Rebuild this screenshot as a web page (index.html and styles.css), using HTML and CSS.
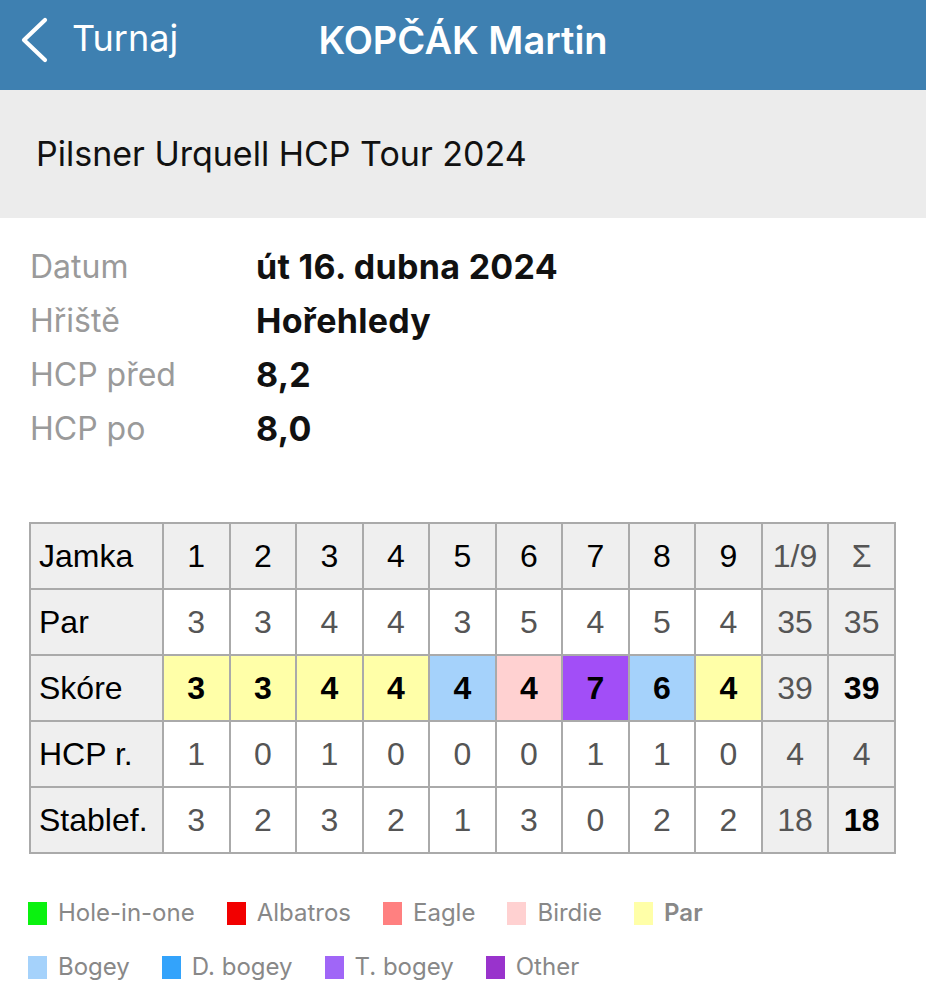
FILE: index.html
```html
<!DOCTYPE html>
<html lang="cs">
  <head>
    <meta charset="UTF-8" />
    <meta name="viewport" content="width=device-width, initial-scale=1.0" />
    <title>KOPČÁK Martin</title>
    <link rel="stylesheet" href="styles.css">
  </head>
  <body>
    <div class="nav">
      <a class="back" href="#">
        <svg class="chevron" width="30" height="48" viewBox="0 0 30 48">
          <path d="M25 4 L4 24 L25 44" fill="none" stroke="#fff" stroke-width="4.2" stroke-linecap="round" stroke-linejoin="round" />
        </svg>
        <span>Turnaj</span>
      </a>
      <div class="nav_title">KOPČÁK Martin</div>
      <div></div>
    </div>

    <div class="tour">Pilsner Urquell HCP Tour 2024</div>

    <div class="info">
      <div class="label">Datum</div>
      <div class="value">út 16. dubna 2024</div>
      <div class="label">Hřiště</div>
      <div class="value">Hořehledy</div>
      <div class="label">HCP před</div>
      <div class="value">8,2</div>
      <div class="label">HCP po</div>
      <div class="value">8,0</div>
    </div>

    <table class="card">
      <colgroup>
        <col class="col_name" />
        <col span="11" />
      </colgroup>
      <tr class="row_head">
        <td class="name">Jamka</td>
        <td>1</td><td>2</td><td>3</td><td>4</td><td>5</td><td>6</td><td>7</td><td>8</td><td>9</td>
        <td class="sum">1/9</td>
        <td class="sum">Σ</td>
      </tr>
      <tr>
        <td class="name">Par</td>
        <td>3</td><td>3</td><td>4</td><td>4</td><td>3</td><td>5</td><td>4</td><td>5</td><td>4</td>
        <td class="sum">35</td>
        <td class="sum">35</td>
      </tr>
      <tr class="row_score">
        <td class="name">Skóre</td>
        <td class="par">3</td>
        <td class="par">3</td>
        <td class="par">4</td>
        <td class="par">4</td>
        <td class="bogey">4</td>
        <td class="birdie">4</td>
        <td class="tbogey">7</td>
        <td class="bogey">6</td>
        <td class="par">4</td>
        <td class="sum">39</td>
        <td class="sum total">39</td>
      </tr>
      <tr>
        <td class="name">HCP r.</td>
        <td>1</td><td>0</td><td>1</td><td>0</td><td>0</td><td>0</td><td>1</td><td>1</td><td>0</td>
        <td class="sum">4</td>
        <td class="sum">4</td>
      </tr>
      <tr>
        <td class="name">Stablef.</td>
        <td>3</td><td>2</td><td>3</td><td>2</td><td>1</td><td>3</td><td>0</td><td>2</td><td>2</td>
        <td class="sum">18</td>
        <td class="sum total">18</td>
      </tr>
    </table>

    <ul class="legend">
      <li><i class="hio"></i>Hole-in-one</li>
      <li><i class="albatros"></i>Albatros</li>
      <li><i class="eagle"></i>Eagle</li>
      <li><i class="birdie"></i>Birdie</li>
      <li class="current"><i class="par"></i>Par</li>
    </ul>
    <ul class="legend">
      <li><i class="bogey"></i>Bogey</li>
      <li><i class="dbogey"></i>D. bogey</li>
      <li><i class="tbogey"></i>T. bogey</li>
      <li><i class="other"></i>Other</li>
    </ul>
  </body>
</html>
```

FILE: styles.css
```css
html,
body,
div,
span,
a,
table,
tr,
td,
ul,
li,
i {
  margin: 0;
  padding: 0;
  border: 0;
  font-size: 100%;
  font-weight: normal;
  font-style: normal;
}

body {
  width: 926px;
  line-height: 1;
  background: #fff;
  color: #000;
  font-family: Inter, "Noto Sans", sans-serif;
}

a {
  color: #fff;
  text-decoration: none;
}

li {
  list-style: none;
}

/* nav bar */
.nav {
  height: 90px;
  background: #3e80b1;
  display: grid;
  grid-template-columns: 1fr auto 1fr;
  align-items: center;
  padding-bottom: 10px;
  box-sizing: border-box;
}
.back {
  display: flex;
  align-items: center;
  gap: 22px;
  padding-left: 20px;
  font-size: 36px;
}
.chevron {
  display: block;
}
.back span {
  margin-top: -4px;
}
.nav_title {
  color: #fff;
  font-size: 38px;
  font-weight: 600;
}

/* tour band */
.tour {
  height: 128px;
  background: #ececec;
  display: flex;
  align-items: center;
  padding-left: 36px;
  font-size: 34px;
  color: #111;
}

/* info rows */
.info {
  display: grid;
  grid-template-columns: 226px auto;
  grid-auto-rows: 54px;
  align-items: center;
  padding: 22px 0 0 30px;
  font-size: 32px;
}
.info .label {
  color: #9a9a9a;
}
.info .value {
  font-size: 34px;
  letter-spacing: 0.3px;
  font-weight: 700;
  color: #111;
}

/* score card */
.card {
  margin: 66px 0 0 29px;
  width: 867px;
  table-layout: fixed;
  border-collapse: collapse;
  font-family: "Liberation Sans", Arial, sans-serif;
  font-size: 32px;
}
.col_name {
  width: 133px;
}
.card td {
  height: 64px;
  border: 2px solid #aaa;
  text-align: center;
  vertical-align: middle;
  color: #555;
  padding: 0;
}
.card .name {
  text-align: left;
  padding-left: 8px;
  color: #000;
  background: #efefef;
}
.card .row_head td {
  background: #efefef;
  color: #000;
}
.card .row_head .sum,
.card .sum {
  background: #efefef;
  color: #555;
}
.card .row_score td {
  color: #000;
  font-weight: 700;
}
.card .row_score .name {
  font-weight: normal;
}
.card .row_score .sum {
  color: #555;
  font-weight: normal;
}
.card .row_score .total,
.card .total {
  color: #000;
  font-weight: 700;
}
.card .par {
  background: #ffffa8;
}
.card .bogey {
  background: #a5d2fb;
}
.card .birdie {
  background: #ffd1d1;
}
.card .tbogey {
  background: #a24ef7;
}

/* legend */
.legend {
  display: flex;
  gap: 32px;
  padding-left: 28px;
  height: 54px;
  align-items: center;
  font-size: 24px;
  color: #888;
}
.legend:first-of-type {
  margin-top: 32px;
}
.legend li {
  display: flex;
  align-items: center;
  gap: 11px;
}
.legend .current {
  font-weight: 600;
}
.legend i {
  display: block;
  width: 19px;
  height: 23px;
}
.legend .hio {
  background: #0af20f;
}
.legend .albatros {
  background: #f20000;
}
.legend .eagle {
  background: #ff8080;
}
.legend .birdie {
  background: #ffd1d1;
}
.legend .par {
  background: #ffffa8;
}
.legend .bogey {
  background: #a5d2fb;
}
.legend .dbogey {
  background: #33a3fb;
}
.legend .tbogey {
  background: #a066f7;
}
.legend .other {
  background: #9933cc;
}
```
